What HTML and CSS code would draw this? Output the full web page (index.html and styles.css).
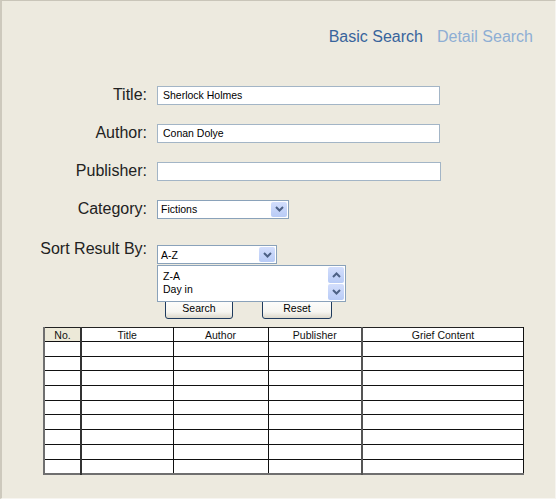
FILE: index.html
```html
<!DOCTYPE html>
<html>
<head>
<meta charset="utf-8">
<link rel="stylesheet" href="styles.css">
</head>
<body>
<div class="window">
  <nav class="tabs">
    <a class="tab tab-active">Basic Search</a>
    <a class="tab">Detail Search</a>
  </nav>
  <form class="search-form">
    <div class="row">
      <label class="lbl">Title:</label>
      <input class="textbox" type="text" value="Sherlock Holmes">
    </div>
    <div class="row">
      <label class="lbl">Author:</label>
      <input class="textbox" type="text" value="Conan Dolye">
    </div>
    <div class="row">
      <label class="lbl">Publisher:</label>
      <input class="textbox textbox-wide" type="text" value="">
    </div>
    <div class="row">
      <label class="lbl">Category:</label>
      <div class="combo combo-category">
        <span class="combo-text">Fictions</span>
        <span class="arrow-btn"><svg width="9" height="6" viewBox="0 0 9 6"><polyline points="1,1 4.5,4.5 8,1" fill="none" stroke="#4d6185" stroke-width="2"/></svg></span>
      </div>
    </div>
    <div class="row-sort">
      <label class="lbl">Sort Result By:</label>
      <div class="sort-field">
        <div class="combo combo-sort">
          <span class="combo-text">A-Z</span>
          <span class="arrow-btn"><svg width="9" height="6" viewBox="0 0 9 6"><polyline points="1,1 4.5,4.5 8,1" fill="none" stroke="#4d6185" stroke-width="2"/></svg></span>
        </div>
        <div class="dropdown-list">
          <div class="options">
            <div class="option">Z-A</div>
            <div class="option">Day in</div>
          </div>
          <div class="scrollbar">
            <span class="arrow-btn scroll-btn"><svg width="9" height="6" viewBox="0 0 9 6"><polyline points="1,5 4.5,1.5 8,5" fill="none" stroke="#4d6185" stroke-width="2"/></svg></span>
            <span class="arrow-btn scroll-btn"><svg width="9" height="6" viewBox="0 0 9 6"><polyline points="1,1 4.5,4.5 8,1" fill="none" stroke="#4d6185" stroke-width="2"/></svg></span>
          </div>
        </div>
      </div>
    </div>
    <div class="buttons">
      <button type="button" class="btn">Search</button>
      <button type="button" class="btn btn-reset">Reset</button>
    </div>
  </form>
  <table class="results">
    <thead>
      <tr>
        <th class="c-no">No.</th>
        <th class="c-title">Title</th>
        <th class="c-author">Author</th>
        <th class="c-pub">Publisher</th>
        <th class="c-grief">Grief Content</th>
      </tr>
    </thead>
    <tbody>
      <tr><td class="c-no"></td><td></td><td></td><td class="c-pub"></td><td></td></tr>
      <tr><td class="c-no"></td><td></td><td></td><td class="c-pub"></td><td></td></tr>
      <tr><td class="c-no"></td><td></td><td></td><td class="c-pub"></td><td></td></tr>
      <tr><td class="c-no"></td><td></td><td></td><td class="c-pub"></td><td></td></tr>
      <tr><td class="c-no"></td><td></td><td></td><td class="c-pub"></td><td></td></tr>
      <tr><td class="c-no"></td><td></td><td></td><td class="c-pub"></td><td></td></tr>
      <tr><td class="c-no"></td><td></td><td></td><td class="c-pub"></td><td></td></tr>
      <tr><td class="c-no"></td><td></td><td></td><td class="c-pub"></td><td></td></tr>
      <tr><td class="c-no"></td><td></td><td></td><td class="c-pub"></td><td></td></tr>
    </tbody>
  </table>
</div>
</body>
</html>
```

FILE: styles.css
```css
* { box-sizing: border-box; }

html, body {
  margin: 0;
  padding: 0;
}

body {
  font-family: "Liberation Sans", Arial, sans-serif;
  background: #edeadf;
}

.window {
  width: 556px;
  height: 499px;
  background: #edeadf;
  border-top: 1px solid #c9c5b9;
  border-left: 2px solid #cdc9bd;
  border-right: 1px solid #f7f5f0;
  border-bottom: 1px solid #f7f5f0;
  overflow: hidden;
}

.tabs {
  display: flex;
  justify-content: flex-end;
  gap: 14px;
  padding: 26px 22px 0 0;
  font-size: 16px;
  line-height: 20px;
}

.tab {
  color: #8eaed4;
  text-decoration: none;
}

.tab-active {
  color: #38649c;
}

.search-form {
  margin-top: 29px;
}

.row {
  display: flex;
  align-items: center;
  height: 38px;
}

.lbl {
  width: 145px;
  text-align: right;
  font-size: 16px;
  line-height: 20px;
  color: #222;
  margin-right: 10px;
  flex-shrink: 0;
}

.textbox {
  width: 283px;
  height: 19px;
  margin: 0;
  padding: 0 0 0 5px;
  border: 1px solid #a3b5c6;
  background: #fff;
  font-family: "Liberation Sans", Arial, sans-serif;
  font-size: 10.5px;
  color: #000;
  outline: none;
}

.textbox-wide {
  width: 284px;
}

.combo {
  position: relative;
  display: flex;
  align-items: center;
  height: 19px;
  border: 1px solid #8aa2ba;
  background: #fff;
  font-size: 10.5px;
  color: #000;
}

.combo-category {
  width: 132px;
}

.combo-sort {
  width: 120px;
}

.combo-text {
  flex: 1;
  padding-left: 3px;
}

.arrow-btn {
  display: flex;
  align-items: center;
  justify-content: center;
  width: 16px;
  height: 15px;
  margin-right: 1px;
  background: linear-gradient(#d3defc, #b8cbf6);
  border-radius: 2px;
}

.row-sort {
  display: flex;
  align-items: flex-start;
  margin-top: 11px;
}

.sort-field {
  position: relative;
  margin-top: 6px;
}

.dropdown-list {
  position: absolute;
  top: 20px;
  left: 0;
  width: 189px;
  height: 37px;
  display: flex;
  border: 1px solid #8aa2ba;
  background: #fff;
  z-index: 2;
}

.options {
  flex: 1;
  padding: 4px 0 0 5px;
  font-size: 10.5px;
  line-height: 13px;
  color: #000;
}

.scrollbar {
  display: flex;
  flex-direction: column;
  justify-content: space-between;
  padding: 1px 0;
}

.scroll-btn {
  height: 16px;
}

.buttons {
  display: flex;
  gap: 29px;
  margin: 33px 0 0 163px;
}

.btn {
  width: 68px;
  height: 22px;
  margin: 0;
  padding: 0;
  border: 1px solid #1f3b5e;
  border-radius: 3px;
  background: linear-gradient(#ffffff 0%, #f6f5f0 70%, #dcd8cb 100%);
  font-family: "Liberation Sans", Arial, sans-serif;
  font-size: 10.5px;
  color: #000;
}

.btn-reset {
  width: 70px;
}

.results {
  margin: 8px 0 0 41px;
  width: 481px;
  border-collapse: collapse;
  table-layout: fixed;
  background: #fff;
  border-left: 2px solid #6f6f6f;
  border-bottom: 2px solid #6f6f6f;
  border-top: 1px solid #222;
  border-right: 1px solid #000;
}

.results th,
.results td {
  border: 1px solid #111;
  height: 14.7px;
  padding: 0;
  font-weight: normal;
  font-size: 10.5px;
  line-height: 12px;
  color: #111;
  text-align: center;
}

.results th {
  height: 14px;
  border-top: 1px solid #222;
}

.results th.c-no {
  background: #ece9d8;
}

.c-no { width: 37px; }
.c-title { width: 92px; }
.c-author { width: 95px; }
.c-pub { width: 94px; }

.results .c-no {
  border-right: 2px solid #333;
}

.results .c-pub {
  border-right: 2px solid #555;
}
```
